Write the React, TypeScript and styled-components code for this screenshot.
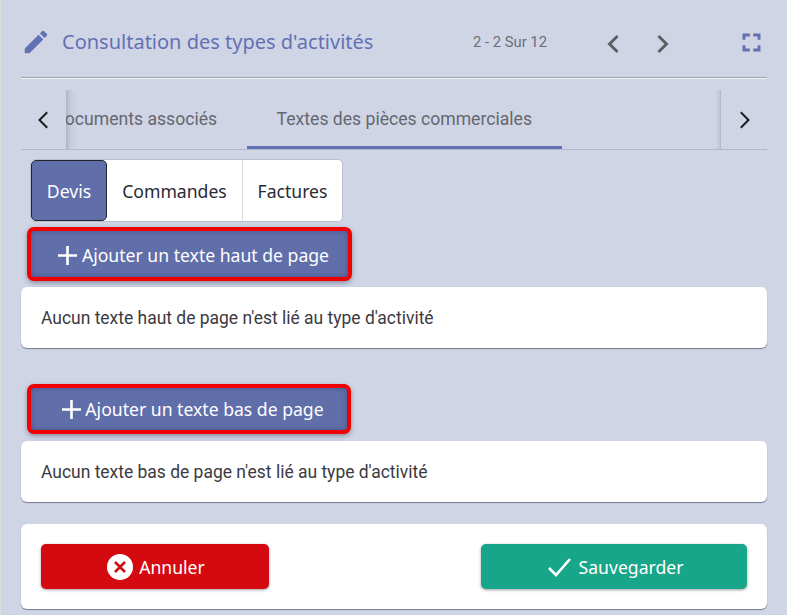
import React from "react";
import styled, { createGlobalStyle } from "styled-components";

const Global = createGlobalStyle`
  html, body { margin: 0; padding: 0; background: #d0d5e6; }
  body { font-family: "Roboto", "Liberation Sans", sans-serif; }
  * { box-sizing: border-box; }
`;

const Page = styled.div`
  width: 787px;
  height: 615px;
  overflow: hidden;
  background: #d0d5e6;
  padding: 0 20px 0 20px;
  border-left: 1px solid #dcdcdc;
  margin: 0;
`;

const Header = styled.header`
  height: 78px;
  display: flex;
  align-items: center;
  border-bottom: 1px solid #a3a3a6;
  box-shadow: 0 1px 0 #f2f3f8;
  padding-top: 6px;
`;

const Title = styled.h1`
  margin: 0 0 0 11px;
  width: 411px;
  font: 400 20px/26px "Noto Sans", sans-serif;
  color: #6271b3;
  white-space: nowrap;
`;

const Pager = styled.span`
  width: 75px;
  font: 400 14.8px/20px "Roboto", sans-serif;
  color: #6b6e78;
`;

const PagerButton = styled.button<{ $left: number }>`
  border: 0;
  background: none;
  padding: 0;
  width: 24px;
  height: 24px;
  margin-left: ${(p) => p.$left}px;
  color: #5e6068;
  display: flex;
  position: relative;
  top: 2px;
`;

const Fullscreen = styled.button`
  border: 0;
  background: none;
  padding: 0;
  width: 27px;
  height: 27px;
  margin: 2px 0 0 63px;
  color: #6271b3;
  display: flex;
`;

const TabBar = styled.div`
  height: 72px;
  display: flex;
  align-items: stretch;
  border-bottom: 1px solid #b4b8cb;
  padding-top: 12px;
`;

const Scroll = styled.button<{ $side: "left" | "right" }>`
  flex: 0 0 ${(p) => (p.$side === "left" ? 45 : 46)}px;
  border: 0;
  background: #d0d5e6;
  padding: ${(p) => (p.$side === "left" ? "0 2px 0 0" : "0 0 0 2px")};
  display: flex;
  align-items: center;
  justify-content: center;
  color: #1c1c20;
  position: relative;
  z-index: 1;

  &::after {
    content: "";
    position: absolute;
    top: 0;
    bottom: 0;
    ${(p) => (p.$side === "left" ? "left: 100%; width: 12px;" : "right: 100%; width: 6px;")}
    background: linear-gradient(
      ${(p) => (p.$side === "left" ? "to right" : "to left")},
      rgba(90, 92, 120, 0.28),
      rgba(120, 125, 155, 0.12) 35%,
      rgba(208, 213, 230, 0)
    );
  }
`;

const TabTrack = styled.div`
  flex: 1;
  overflow: hidden;
  display: flex;
  justify-content: flex-end;
  align-items: stretch;
`;

const Tab = styled.div<{ $active?: boolean }>`
  flex: none;
  padding: 1px 30px 0 29.5px;
  display: flex;
  align-items: center;
  font: 400 17.6px/24px "Roboto", sans-serif;
  color: #65676f;
  border-bottom: 3px solid ${(p) => (p.$active ? "#6271b3" : "transparent")};
  margin-right: ${(p) => (p.$active ? 159 : 0)}px;
  white-space: nowrap;
`;

const Segments = styled.div`
  display: inline-flex;
  margin: 9px 0 0 9px;
  height: 63px;
  background: #fff;
  border: 1px solid #b9bdd0;
  border-radius: 5px;
`;

const Segment = styled.div<{ $active?: boolean; $w: number }>`
  width: ${(p) => p.$w}px;
  display: flex;
  align-items: center;
  justify-content: center;
  font: 400 17.6px/24px "Noto Sans", sans-serif;
  color: ${(p) => (p.$active ? "#fff" : "#2a2a33")};
  background: ${(p) => (p.$active ? "#606eaa" : "#fff")};
  border: ${(p) => (p.$active ? "1px solid #22242e" : "0")};
  border-left: ${(p) => (p.$active ? "1px solid #22242e" : "1px solid #dcdde3")};
  border-radius: ${(p) => (p.$active ? "5px" : "0")};
  &:nth-child(2) { border-left: 0; }
  &:last-child { border-radius: 0 5px 5px 0; }
`;

const AddButton = styled.button<{ $w: number; $h: number; $top: number; $gap: number; $pad: number; $padTop: number }>`
  display: flex;
  align-items: center;
  justify-content: center;
  gap: ${(p) => p.$gap}px;
  width: ${(p) => p.$w}px;
  height: ${(p) => p.$h}px;
  margin: ${(p) => p.$top}px 0 0 6px;
  padding: ${(p) => p.$padTop}px 0 0 ${(p) => p.$pad}px;
  background: #606eaa;
  border: 4px solid #f00000;
  border-radius: 7px;
  box-shadow: 0 2px 5px rgba(50, 50, 80, 0.45), inset 0 0 5px rgba(40, 44, 90, 0.45);
  color: #fff;
  font: 400 17.6px/24px "Noto Sans", sans-serif;
`;

const Card = styled.div<{ $top: number; $h: number }>`
  margin-top: ${(p) => p.$top}px;
  height: ${(p) => p.$h}px;
  background: #fff;
  border-radius: 6px;
  box-shadow: 0 1px 1px rgba(60, 60, 80, 0.6);
  display: flex;
  align-items: center;
  padding: 0 20px;
  font: 400 17.47px/24px "Roboto", sans-serif;
  color: #3a3a3f;
`;

const Footer = styled(Card)`
  justify-content: space-between;
`;

const Action = styled.button<{ $color: string; $w: number }>`
  width: ${(p) => p.$w}px;
  height: 45px;
  border: 0;
  border-radius: 5px;
  background: ${(p) => p.$color};
  color: #fff;
  display: flex;
  align-items: center;
  justify-content: center;
  gap: 6px;
  padding: 0 0 0 2px;
  font: 400 17.6px/24px "Noto Sans", sans-serif;
  box-shadow: 0 1px 3px rgba(40, 40, 60, 0.45);
`;

const Chevron = ({ dir, w = 2 }: { dir: "l" | "r"; w?: number }) => (
  <svg width="24" height="24" viewBox="0 0 24 24" fill="none" stroke="currentColor" strokeWidth={w} strokeLinecap="square">
    <path d={dir === "l" ? "M15.5 5 8.5 12l7 7" : "M8.5 5l7 7-7 7"} />
  </svg>
);

const Plus = () => (
  <svg width="19" height="19" viewBox="0 0 19 19" fill="none" stroke="#fff" strokeWidth="2.6">
    <path d="M9.5 0v19M0 9.5h19" />
  </svg>
);

export default function App() {
  return (
    <Page>
      <Global />
      <Header>
        <svg width="30" height="30" viewBox="0 0 24 24" fill="#6271b3">
          <path d="M3 17.25V21h3.75L17.81 9.94l-3.75-3.75L3 17.25zM20.71 7.04a1 1 0 0 0 0-1.41l-2.34-2.34a1 1 0 0 0-1.41 0l-1.83 1.83 3.75 3.75 1.83-1.83z" />
        </svg>
        <Title>Consultation des types d'activités</Title>
        <Pager>2 - 2 Sur 12</Pager>
        <PagerButton $left={53}><Chevron dir="l" w={3} /></PagerButton>
        <PagerButton $left={26}><Chevron dir="r" w={3} /></PagerButton>
        <Fullscreen>
          <svg width="27" height="27" viewBox="0 0 24 24" fill="currentColor">
            <path d="M4 4h6.5v2.6H6.6V9.5H4V4zm9.5 0H20v5.5h-2.6V6.6h-3.9V4zM4 14.5h2.6v2.9h3.9V20H4v-5.5zm13.4 0H20V20h-6.5v-2.6h3.9v-2.9z" />
          </svg>
        </Fullscreen>
      </Header>
      <TabBar>
        <Scroll $side="left"><Chevron dir="l" /></Scroll>
        <TabTrack>
          <Tab>Documents associés</Tab>
          <Tab $active>Textes des pièces commerciales</Tab>
        </TabTrack>
        <Scroll $side="right"><Chevron dir="r" /></Scroll>
      </TabBar>
      <Segments>
        <Segment $active $w={76}>Devis</Segment>
        <Segment $w={135}>Commandes</Segment>
        <Segment $w={100}>Factures</Segment>
      </Segments>
      <AddButton $w={325} $h={54} $top={5} $gap={5} $pad={8} $padTop={2}><Plus />Ajouter un texte haut de page</AddButton>
      <Card $top={6} $h={61}>Aucun texte haut de page n'est lié au type d'activité</Card>
      <AddButton $w={324} $h={50} $top={36} $gap={4} $pad={8} $padTop={0}><Plus />Ajouter un texte bas de page</AddButton>
      <Card $top={7} $h={61}>Aucun texte bas de page n'est lié au type d'activité</Card>
      <Footer $top={22} $h={85}>
        <Action $color="#d40a10" $w={228}>
          <svg width="26" height="26" viewBox="0 0 26 26">
            <circle cx="13" cy="13" r="13" fill="#fff" />
            <path d="M8 8l10 10M18 8 8 18" stroke="#d40a10" strokeWidth="2.6" />
          </svg>
          Annuler
        </Action>
        <Action $color="#17a689" $w={266}>
          <svg width="26" height="22" viewBox="0 0 26 22" fill="none" stroke="#fff" strokeWidth="2.6">
            <path d="M2 12l7 7L23 3" />
          </svg>
          Sauvegarder
        </Action>
      </Footer>
    </Page>
  );
}
